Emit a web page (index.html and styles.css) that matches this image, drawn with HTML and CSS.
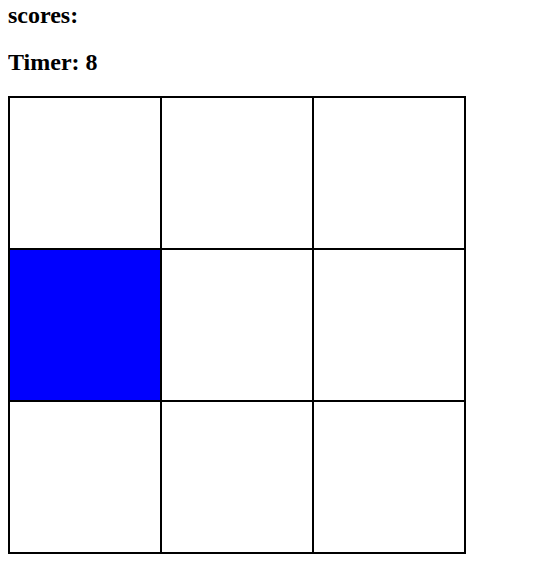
FILE: index.html
```html
<!DOCTYPE html>
<html>
<head>
<meta charset="utf-8">
<link rel="stylesheet" href="styles.css">
</head>
<body>
<h2 class="title first">scores:</h2>
<h2 class="title">Timer: 8</h2>
<div class="board">
  <div class="cell"></div>
  <div class="cell"></div>
  <div class="cell"></div>
  <div class="cell active"></div>
  <div class="cell"></div>
  <div class="cell"></div>
  <div class="cell"></div>
  <div class="cell"></div>
  <div class="cell"></div>
</div>
</body>
</html>
```
FILE: styles.css
```css
body {
  margin: 0 8px 8px;
  padding-top: 2px;
  font-family: "Liberation Serif", "Times New Roman", serif;
  background: #fff;
  color: #000;
}
.title {
  font-size: 24px;
  font-weight: bold;
  margin: 19.92px 0;
}
.title.first {
  margin-top: 0;
}
.board {
  display: grid;
  grid-template-columns: repeat(3, 152px);
  width: 456px;
  border: 1px solid #000;
}
.cell {
  width: 150px;
  height: 150px;
  border: 1px solid #000;
}
.cell.active {
  background: #0000ff;
}
```
